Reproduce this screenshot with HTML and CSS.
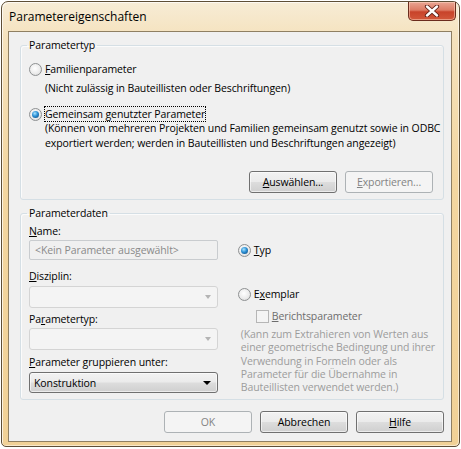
FILE: index.html
```html
<!DOCTYPE html>
<html lang="de">
<head>
    <meta charset="UTF-8">
    <title>Parametereigenschaften</title>
    <link rel="stylesheet" href="styles.css">
</head>
<body>

    <div class="window">
        <div class="titlebar">
            <span class="title">Parametereigenschaften</span>
            <span class="close-btn">
                <svg width="16" height="12" viewBox="0 0 16 12">
                    <path d="M3 1.5 L13 10.5 M13 1.5 L3 10.5" stroke="#5a1d14" stroke-width="4.2" stroke-linecap="round"/>
                    <path d="M3 1.5 L13 10.5 M13 1.5 L3 10.5" stroke="#ffffff" stroke-width="2.4" stroke-linecap="round"/>
                </svg>
            </span>
        </div>

        <div class="client">

            <!-- Parametertyp -->
            <fieldset class="group group-type">
                <legend>Parametertyp</legend>
                <div class="radio-row">
                    <span class="radio"></span>
                    <span><u>F</u>amilienparameter</span>
                </div>
                <p class="hint first-hint">(Nicht zulässig in Bauteillisten oder Beschriftungen)</p>
                <div class="radio-row shared-row">
                    <span class="radio checked"></span>
                    <span class="focus">Gemeinsam genutzter Parameter</span>
                </div>
                <p class="hint">(Können von mehreren Projekten und Familien gemeinsam genutzt sowie in ODBC<br>exportiert werden; werden in Bauteillisten und Beschriftungen angezeigt)</p>
                <div class="btn-row">
                    <button class="btn"><u>A</u>uswählen...</button>
                    <button class="btn" disabled><u>E</u>xportieren...</button>
                </div>
            </fieldset>

            <!-- Parameterdaten -->
            <fieldset class="group group-data">
                <legend>Parameterdaten</legend>
                <div class="data-cols">
                    <div class="data-left">
                        <div class="field-label"><u>N</u>ame:</div>
                        <div class="textbox">&lt;Kein Parameter ausgewählt&gt;</div>

                        <div class="field-label label-disziplin"><u>D</u>isziplin:</div>
                        <div class="combo"><span class="arrow"></span></div>

                        <div class="field-label label-typ">Pa<u>r</u>ametertyp:</div>
                        <div class="combo combo-typ"><span class="arrow"></span></div>

                        <div class="field-label label-group"><u>P</u>arameter gruppieren unter:</div>
                        <div class="combo active"><span>Konstruktion</span><span class="arrow"></span></div>
                    </div>

                    <div class="data-right">
                        <div class="radio-row typ-row">
                            <span class="radio checked"></span>
                            <span><u>T</u>yp</span>
                        </div>
                        <div class="radio-row exemplar-row">
                            <span class="radio"></span>
                            <span>E<u>x</u>emplar</span>
                        </div>
                        <div class="check-row">
                            <span class="checkbox"></span>
                            <span><u>B</u>erichtsparameter</span>
                        </div>
                        <p class="note">(Kann zum Extrahieren von Werten aus<br>einer geometrische Bedingung und ihrer<br>Verwendung in Formeln oder als<br>Parameter für die Übernahme in<br>Bauteillisten verwendet werden.)</p>
                    </div>
                </div>
            </fieldset>

            <div class="dialog-buttons">
                <button class="btn" disabled>OK</button>
                <button class="btn">Abbrechen</button>
                <button class="btn"><u>H</u>ilfe</button>
            </div>
        </div>
    </div>

</body>
</html>
```

FILE: styles.css
```css
/* Reset */
* {
    margin: 0;
    padding: 0;
    box-sizing: border-box;
}

body {
    background: #ffffff;
    font-family: 'Open Sans', 'Noto Sans', sans-serif;
    font-size: 10.5px;
    letter-spacing: -0.1px;
    color: #000;
}

u {
    text-decoration: underline;
    text-underline-offset: 1px;
}

/* Window frame */
.window {
    width: 459px;
    height: 446px;
    margin: 1px 0 0 1px;
    border: 1px solid #5e4e36;
    border-radius: 7px 7px 5px 5px;
    padding: 0 7px 4px 6px;
    display: flex;
    flex-direction: column;
    background: linear-gradient(to bottom, #f7ecd6 0%, #f5e2bd 8%, #f3d6a0 40%, #f1d196 100%);
    box-shadow: inset 1px 1px 0 rgba(255, 255, 255, 0.7), inset -1px -1px 0 rgba(255, 255, 255, 0.5);
}

.titlebar {
    height: 29px;
    display: flex;
    justify-content: space-between;
    align-items: flex-start;
}

.title {
    font-size: 12px;
    letter-spacing: 0;
    line-height: 16px;
    margin: 7px 0 0 1px;
    color: #000;
}

.close-btn {
    width: 48px;
    height: 19px;
    margin-right: -4px;
    border: 1px solid #6b2c1d;
    border-top: none;
    border-radius: 0 0 5px 5px;
    background: linear-gradient(to bottom, #e9a593 0%, #dd7b64 45%, #c8432a 55%, #d2583b 100%);
    box-shadow: inset 0 0 0 1px rgba(255, 220, 200, 0.5);
    display: flex;
    align-items: center;
    justify-content: center;
}

/* Client area */
.client {
    flex: 1;
    border: 1px solid #8f7f62;
    background: #f0f0f0;
    padding: 6px 7px 0 11px;
    white-space: nowrap;
}

/* Group boxes */
.group {
    min-width: 0;
    border: 1px solid #d5dfe5;
    border-radius: 3px;
    box-shadow: inset 1px 1px 0 #fbfbfb;
    padding: 10px 10px 6px 8px;
}

.group legend {
    margin-left: -2px;
    padding: 0 2px;
    line-height: 14px;
}

.group-data {
    margin-top: 6px;
    padding: 4px 8px 5px 8px;
}

/* Radios and checkboxes */
.radio-row,
.check-row {
    display: flex;
    align-items: center;
    gap: 3px;
    line-height: 15px;
}

.radio {
    width: 13px;
    height: 13px;
    border-radius: 50%;
    border: 1px solid #8e9192;
    background: radial-gradient(circle at 45% 40%, #ffffff 0%, #ececec 55%, #d3d3d3 100%);
    position: relative;
    flex-shrink: 0;
}

.radio.checked::after {
    content: "";
    position: absolute;
    left: 2px;
    top: 2px;
    width: 7px;
    height: 7px;
    border-radius: 50%;
    background: radial-gradient(circle at 40% 35%, #a8e4ff 0%, #2b8fd4 45%, #0b3e70 100%);
}

.checkbox {
    width: 13px;
    height: 13px;
    border: 1px solid #b6b6b6;
    background: #f4f4f4;
    flex-shrink: 0;
}

.hint {
    padding-left: 16px;
    line-height: 15px;
}

.first-hint {
    margin-top: 4px;
}

.shared-row {
    margin-top: 11px;
}

.focus {
    outline: 1px dotted #000;
    outline-offset: 0;
    line-height: 14px;
}

/* Buttons */
.btn-row {
    display: flex;
    justify-content: flex-end;
    gap: 8px;
    margin-top: 20px;
}

.btn {
    width: 88px;
    height: 22px;
    border: 1px solid #707070;
    border-radius: 3px;
    background: linear-gradient(to bottom, #f2f2f2 0%, #ebebeb 48%, #dddddd 52%, #cfcfcf 100%);
    box-shadow: inset 0 0 0 1px rgba(255, 255, 255, 0.6);
    font-family: inherit;
    font-size: 10.5px;
    letter-spacing: -0.1px;
    color: #000;
}

.btn:disabled {
    border-color: #adb2b5;
    background: #f4f4f4;
    box-shadow: none;
    color: #838383;
}

/* Parameterdaten */
.data-cols {
    display: flex;
    gap: 20px;
}

.data-left {
    width: 191px;
}

.field-label {
    line-height: 15px;
}

.label-disziplin {
    margin-top: 9px;
}

.label-typ {
    margin-top: 4px;
}

.label-group {
    margin-top: 5px;
}

.textbox {
    margin-top: 1px;
    height: 20px;
    border: 1px solid #c9cccf;
    border-radius: 2px;
    background: #f0f0f0;
    color: #8a8a8a;
    padding-left: 5px;
    line-height: 18px;
}

.combo {
    margin-top: 2px;
    height: 22px;
    border: 1px solid #d4d4d4;
    border-radius: 3px;
    background: #f4f4f4;
    display: flex;
    align-items: center;
    justify-content: space-between;
    padding: 0 6px 0 4px;
}

.combo-typ {
    margin-top: 1px;
}

.combo .arrow {
    margin-left: auto;
    width: 0;
    height: 0;
    border-left: 3.5px solid transparent;
    border-right: 3.5px solid transparent;
    border-top: 4px solid #b4b4b4;
}

.combo.active {
    height: 21px;
    border-color: #707070;
    background: linear-gradient(to bottom, #f2f2f2 0%, #ebebeb 48%, #dddddd 52%, #cfcfcf 100%);
    box-shadow: inset 0 0 0 1px rgba(255, 255, 255, 0.6);
}

.combo.active .arrow {
    border-top-color: #000;
    border-left-width: 4px;
    border-right-width: 4px;
}

.typ-row {
    margin-top: 19px;
}

.exemplar-row {
    margin-top: 29px;
}

.check-row {
    margin-top: 7px;
    padding-left: 18px;
    gap: 3px;
    color: #6d6d6d;
}

.note {
    margin-top: 4px;
    padding-left: 3px;
    line-height: 13.3px;
    color: #9c9c9c;
}

/* Dialog buttons */
.dialog-buttons {
    display: flex;
    justify-content: flex-end;
    gap: 8px;
    margin-top: 11px;
}
```
